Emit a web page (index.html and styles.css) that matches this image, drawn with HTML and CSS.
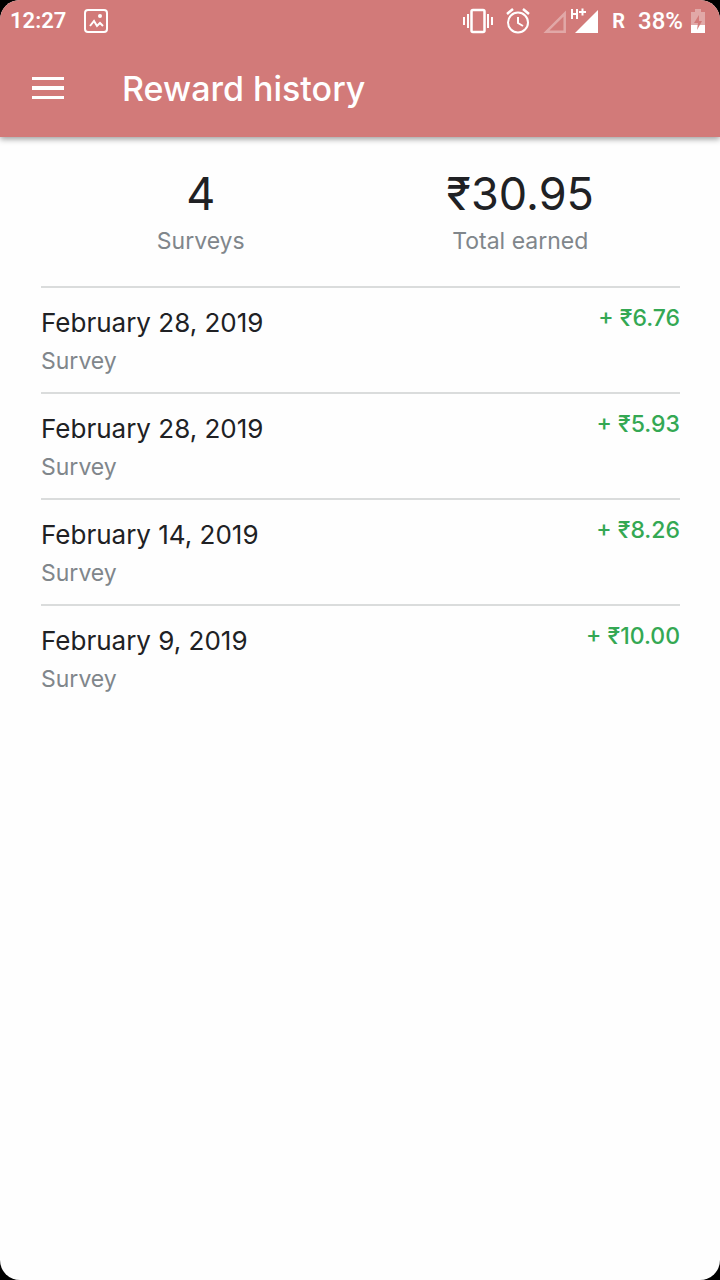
FILE: index.html
```html
<!DOCTYPE html>
<html lang="en">
<head>
    <meta charset="UTF-8">
    <meta name="viewport" content="width=device-width, initial-scale=1.0">
    <title>Reward history</title>
    <link rel="stylesheet" href="styles.css">
</head>
<body>
    <div class="screen">
        <header class="top">
            <div class="status-bar">
                <div class="status-left">
                    <span class="clock">12:27</span>
                    <svg width="24" height="24" viewBox="0 0 24 24" fill="none" stroke="currentColor" stroke-width="2">
                        <rect x="1" y="1" width="22" height="22" rx="3"/>
                        <path d="M6 17l4-5 3 5 3-3 3 3"/>
                        <circle cx="16" cy="7" r="2" fill="currentColor" stroke="none"/>
                    </svg>
                </div>
                <div class="status-right">
                    <!-- vibrate -->
                    <svg width="30" height="26" viewBox="0 0 30 26" fill="none" stroke="currentColor" stroke-width="2">
                        <rect x="8.5" y="2" width="13" height="22" rx="1.5" stroke-width="2.5"/>
                        <path d="M1 9v8M5 6v14M25 6v14M29 9v8"/>
                    </svg>
                    <!-- alarm -->
                    <svg width="24" height="26" viewBox="0 0 24 26" fill="none" stroke="currentColor" stroke-width="2">
                        <circle cx="12" cy="14.5" r="10"/>
                        <path d="M12 9v6l5 3"/>
                        <path d="M1 6l6-5M23 6l-6-5" stroke-width="2.5"/>
                    </svg>
                    <!-- signal -->
                    <svg width="56" height="26" viewBox="0 0 56 26">
                        <path d="M3.5 23.7L21.7 5.5V23.7z" fill="none" stroke="currentColor" stroke-width="2.5" opacity=".35"/>
                        <path d="M32 25L55 2V25z" fill="currentColor"/>
                        <path d="M29 1v10M34 1v10M29 6h5M36 4h7M39.5 .5v7" fill="none" stroke="currentColor" stroke-width="2"/>
                    </svg>
                    <span class="roaming">R</span>
                    <span class="charge">38%</span>
                    <!-- battery -->
                    <svg width="14" height="26" viewBox="0 0 14 26">
                        <path d="M4 1h6v3h4v21H0V4h4z" fill="currentColor" opacity=".35"/>
                        <path d="M0 17h14v8H0z" fill="currentColor"/>
                        <path d="M8 7L3 15h4l-1 7 5-9H8z" fill="#d27a79"/>
                    </svg>
                </div>
            </div>
            <div class="app-bar">
                <button class="menu" aria-label="Menu">
                    <svg width="32" height="22" viewBox="0 0 32 22" fill="currentColor">
                        <path d="M0 0h32v3H0zM0 9h32v4H0zM0 19h32v3H0z"/>
                    </svg>
                </button>
                <h1>Reward history</h1>
            </div>
        </header>

        <main>
            <section class="summary">
                <div class="total">
                    <div class="value">4</div>
                    <div class="label">Surveys</div>
                </div>
                <div class="total">
                    <div class="value">₹30.95</div>
                    <div class="label">Total earned</div>
                </div>
            </section>

            <ul class="rewards">
                <li>
                    <div>
                        <div class="date">February 28, 2019</div>
                        <div class="label">Survey</div>
                    </div>
                    <div class="amount">+ ₹6.76</div>
                </li>
                <li>
                    <div>
                        <div class="date">February 28, 2019</div>
                        <div class="label">Survey</div>
                    </div>
                    <div class="amount">+ ₹5.93</div>
                </li>
                <li>
                    <div>
                        <div class="date">February 14, 2019</div>
                        <div class="label">Survey</div>
                    </div>
                    <div class="amount">+ ₹8.26</div>
                </li>
                <li>
                    <div>
                        <div class="date">February 9, 2019</div>
                        <div class="label">Survey</div>
                    </div>
                    <div class="amount">+ ₹10.00</div>
                </li>
            </ul>
        </main>
    </div>
</body>
</html>
```
FILE: styles.css
```css
* {
    box-sizing: border-box;
}

body {
    margin: 0;
    background: #000;
    color: #202124;
    font-family: Inter, "Open Sans", sans-serif;
}

.screen {
    min-height: 100vh;
    background: #fefefe;
    border-radius: 20px;
    overflow: hidden;
}

.top {
    background: #d27a79;
    color: #fff;
    box-shadow: 0 2px 6px rgba(0, 0, 0, 0.4);
}

svg {
    display: block;
}

.status-bar {
    display: flex;
    justify-content: space-between;
    height: 41px;
    padding: 0 15px 0 10px;
    font-family: Roboto, sans-serif;
    font-size: 24px;
    font-weight: 500;
}

.status-left,
.status-right {
    display: flex;
    align-items: center;
}

.status-left {
    gap: 18px;
}

.status-right {
    gap: 13px;
}

.clock {
    font-size: 22px;
    font-weight: 600;
}

.charge {
    margin-right: -5px;
}

.roaming {
    font-size: 20px;
    font-weight: 700;
}

.app-bar {
    display: flex;
    align-items: center;
    gap: 58px;
    height: 96px;
    padding: 0 32px 2px;
}

.menu {
    padding: 0;
    border: none;
    background: none;
    color: inherit;
    cursor: pointer;
}

h1 {
    margin: 0;
    font-size: 34px;
    font-weight: 500;
}

main {
    padding: 29px 40px 29px 41px;
}

.summary {
    display: grid;
    grid-template-columns: 1fr 1fr;
    padding-bottom: 26px;
    text-align: center;
}

.value {
    font-size: 45px;
    line-height: 56px;
}

.label {
    color: #80868b;
    font-size: 23px;
    line-height: 38px;
}

.rewards {
    margin: 0;
    padding: 0;
    list-style: none;
}

.rewards li {
    display: flex;
    justify-content: space-between;
    min-height: 106px;
    padding-top: 16px;
    border-top: 2px solid #dadcdc;
}

.date {
    font-size: 26px;
    line-height: 38px;
}

.amount {
    color: #34a853;
    font-size: 23px;
    font-weight: 500;
    line-height: 28px;
}
```
